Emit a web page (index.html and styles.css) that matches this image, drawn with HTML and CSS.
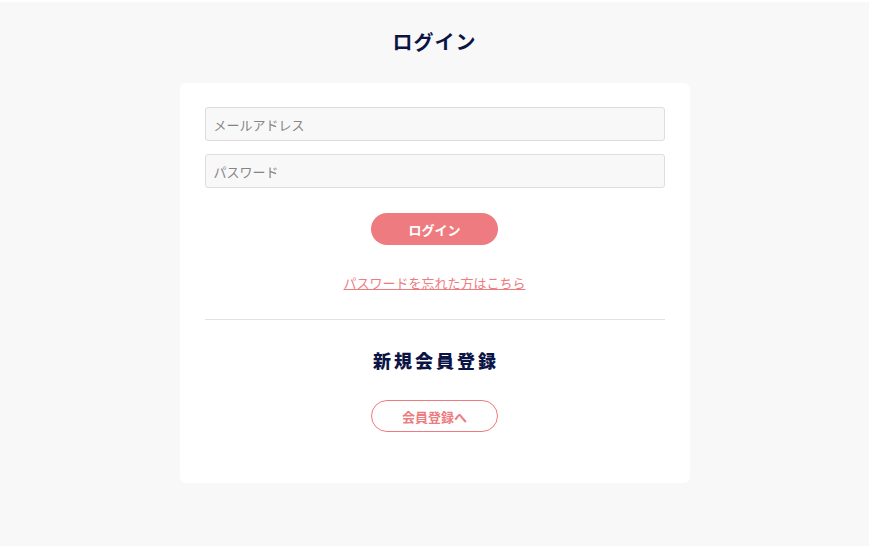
FILE: index.html
```html
<!DOCTYPE html>
<html lang="ja">
  <head>
    <meta charset="utf-8">
    <meta name="viewport" content="width=device-width, initial-scale=1">
    <title>ログイン</title>
    <link rel="stylesheet" href="styles.css">
  </head>
  <body>
    <div class="page">
      <h1 class="page-title">ログイン</h1>

      <div class="card">
        <form class="login-form">
          <input class="field" type="email" placeholder="メールアドレス">
          <input class="field" type="password" placeholder="パスワード">
          <button class="button button-fill" type="button">ログイン</button>
        </form>

        <a class="forgot" href="#">パスワードを忘れた方はこちら</a>

        <hr class="divider">

        <h2 class="section-title">新規会員登録</h2>
        <a class="button button-line" href="#">会員登録へ</a>
      </div>
    </div>
  </body>
</html>
```

FILE: styles.css
```css
html, body {
  margin: 0;
  padding: 0;
}
body {
  background: #fff;
  font-family: "Noto Sans CJK JP", "Noto Sans", sans-serif;
  color: #0c1446;
}
.page {
  background: #f8f8f8;
  margin: 2px 3px 0 0;
  height: 544px;
  box-sizing: border-box;
  padding-top: 26px;
  display: flex;
  flex-direction: column;
  align-items: center;
}
.page-title {
  margin: 0;
  font-size: 20px;
  line-height: 28px;
  font-weight: 700;
  letter-spacing: 1px;
}
.card {
  margin-top: 27px;
  width: 510px;
  box-sizing: border-box;
  background: #fff;
  border-radius: 6px;
  padding: 24px 25px 51px 25px;
  display: flex;
  flex-direction: column;
  align-items: center;
}
.login-form {
  width: 100%;
  display: flex;
  flex-direction: column;
  align-items: center;
  gap: 13px;
}
.field {
  width: 100%;
  height: 34px;
  box-sizing: border-box;
  border: 1px solid #e2dcdc;
  border-radius: 3px;
  background: #f8f8f8;
  padding: 0 8px;
  font-family: inherit;
  font-size: 13px;
  color: #333;
}
.field::placeholder {
  color: #858585;
}
.button {
  display: flex;
  align-items: center;
  justify-content: center;
  width: 127px;
  height: 32px;
  box-sizing: border-box;
  border-radius: 300px;
  font-family: inherit;
  font-size: 13px;
  font-weight: 700;
  text-decoration: none;
  cursor: pointer;
}
.button-fill {
  margin-top: 12px;
  border: 0;
  background: #ee7b80;
  color: #fff;
}
.button-line {
  margin-top: 27px;
  border: 1px solid #ee7b80;
  background: #fff;
  color: #ee7b80;
}
.forgot {
  margin-top: 28px;
  font-size: 13px;
  line-height: 20px;
  color: #ee7b80;
  text-decoration: underline;
}
.divider {
  width: 100%;
  margin: 26px 0 0 0;
  border: 0;
  border-top: 1px solid #e2e2e2;
}
.section-title {
  margin: 27px 0 0 0;
  font-size: 18px;
  line-height: 26px;
  font-weight: 900;
  letter-spacing: 3px;
  padding-left: 3px;
}
```
